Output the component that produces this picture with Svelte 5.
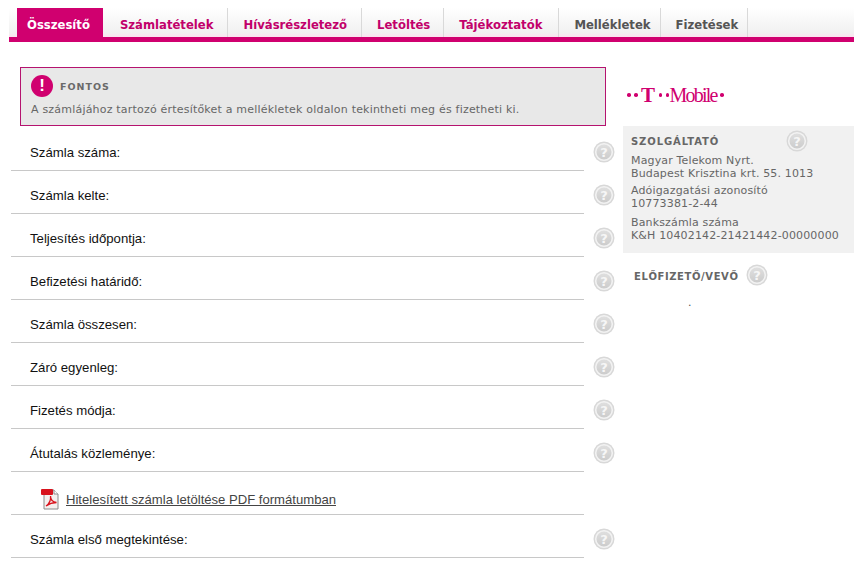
<script>
	const tabs = [
		{label: 'Összesítő', cls: 'active'},
		{label: 'Számlatételek', cls: 'second'},
		{label: 'Hívásrészletező', cls: ''},
		{label: 'Letöltés', cls: 'tight'},
		{label: 'Tájékoztatók', cls: 'wide'},
		{label: 'Mellékletek', cls: 'grey'},
		{label: 'Fizetések', cls: 'grey'}
	];
	const rowsTop = ['Számla száma:', 'Számla kelte:', 'Teljesítés időpontja:', 'Befizetési határidő:', 'Számla összesen:', 'Záró egyenleg:', 'Fizetés módja:', 'Átutalás közleménye:'];
</script>

{#snippet help()}
	<svg class="help" width="22" height="22" viewBox="0 0 22 22" aria-hidden="true">
		<defs>
			<linearGradient id="helpfill" x1="0" y1="0" x2="0" y2="1">
				<stop offset="0" stop-color="#e0e0e0" />
				<stop offset="1" stop-color="#cbcbcb" />
			</linearGradient>
		</defs>
		<circle cx="11" cy="11" r="10.5" fill="#d8d8d8" />
		<circle cx="11" cy="11" r="8.3" fill="url(#helpfill)" stroke="#f2f2f2" stroke-width="1.6" />
		<text x="11" y="15.5" text-anchor="middle" class="qm">?</text>
	</svg>
{/snippet}

<div class="page">
	<nav class="tabs">
		{#each tabs as tab}
			<a href="#top" class="tab {tab.cls}">{tab.label}</a>
		{/each}
	</nav>

	<div class="content">
		<div class="left">
			<div class="alert">
				<div class="alert-head">
					<span class="bang">!</span>
					<span class="alert-title">FONTOS</span>
				</div>
				<p>A számlájához tartozó értesítőket a mellékletek oldalon tekintheti meg és fizetheti ki.</p>
			</div>

			<div class="rows">
				{#each rowsTop as label}
					<div class="row">
						<div class="cell">{label}</div>
						{@render help()}
					</div>
				{/each}
				<div class="row">
					<div class="cell pdf">
						<svg width="22" height="22" viewBox="0 0 22 22" aria-hidden="true">
							<path d="M4 2h10l4 4v15H4z" fill="#f4f0ee" stroke="#8a8a8a" />
							<path d="M14 2v4h4" fill="#fff" stroke="#8a8a8a" />
							<rect x="1" y="1" width="12" height="6" rx="1" fill="#d8121c" />
							<path d="M6 18c3-2 5-6 4.500-10 0 4 2.500 6 6 6.500-4 0-7 1-10.500 3.500z" fill="none" stroke="#d8121c" stroke-width="1.300" />
						</svg>
						<a href="#top">Hitelesített számla letöltése PDF formátumban</a>
					</div>
				</div>
				<div class="row">
					<div class="cell">Számla első megtekintése:</div>
					{@render help()}
				</div>
			</div>
		</div>

		<aside class="right">
			<div class="logo">
				<i></i><i></i><span class="t">T</span><i></i><i></i><span class="mobile">Mobile</span><i></i>
			</div>
			<div class="provider">
				<h3>SZOLGÁLTATÓ</h3>
				<span class="provider-help">{@render help()}</span>
				<p>Magyar Telekom Nyrt.<br />Budapest Krisztina krt. 55. 1013</p>
				<p>Adóigazgatási azonosító<br />10773381-2-44</p>
				<p>Bankszámla száma<br />K&amp;H 10402142-21421442-00000000</p>
			</div>
			<div class="buyer">
				<h3>ELŐFIZETŐ/VEVŐ</h3>
				{@render help()}
			</div>
			<div class="dot">.</div>
		</aside>
	</div>
</div>

<style>
	:global(body) {
		margin: 0;
		background: #fff;
	}
	.page {
		width: 854px;
		height: 572px;
		overflow: hidden;
	}
	.tabs {
		display: flex;
		margin: 8px 0 0 9px;
		padding-left: 8px;
		height: 29px;
		border-bottom: 5px solid #d0006f;
		background: linear-gradient(#fff, #f1f1f1 85%, #fbe3ef);
	}
	.tab {
		display: block;
		padding: 0 14px 0 15px;
		border-right: 1px solid #d9d9d9;
		font: bold 11.65px/34px "DejaVu Sans", sans-serif;
		color: #c2006b;
		text-decoration: none;
	}
	.tab.active {
		background: #d0006f;
		color: #fff;
		padding: 0 13px 0 10px;
		border-right: 0;
	}
	.tab.second {
		padding-left: 17px;
	}
	.tab.tight {
		padding-right: 13px;
	}
	.tab.wide {
		padding-right: 16px;
	}
	.tab.grey {
		color: #555;
		padding-right: 9px;
	}
	.content {
		display: flex;
	}
	.left {
		width: 612px;
		padding-left: 11px;
		box-sizing: border-box;
	}
	.alert {
		margin: 25px 0 0 9px;
		width: 586px;
		height: 59px;
		box-sizing: border-box;
		border: 1px solid #b5136f;
		background: #e8e8e8;
		padding: 6px 10px;
		color: #666;
		font-family: "DejaVu Sans", sans-serif;
	}
	.alert-head {
		display: flex;
		align-items: center;
		gap: 7px;
		padding-top: 1px;
	}
	.bang {
		width: 22px;
		height: 22px;
		border-radius: 50%;
		background: #d0006f;
		color: #fff;
		font: bold 17px/22px "Liberation Sans", sans-serif;
		text-align: center;
	}
	.alert-title {
		font-size: 9.5px;
		font-weight: bold;
		letter-spacing: 1px;
		color: #6a6a6a;
	}
	.alert p {
		margin: 5px 0 0;
		font-size: 11px;
		line-height: 16px;
		letter-spacing: 0.2px;
	}
	.rows {
		margin-top: 2px;
	}
	.row {
		display: flex;
		align-items: center;
		height: 43px;
	}
	.cell {
		width: 573px;
		height: 43px;
		box-sizing: border-box;
		flex: none;
		border-bottom: 1px solid #c8c8c8;
		padding: 17px 0 0 19px;
		font: 13.2px/16px "Liberation Sans", sans-serif;
		color: #111;
	}
	.pdf {
		display: flex;
		align-items: flex-end;
		gap: 4px;
		padding: 0 0 4px 29px;
		font-size: 13.1px;
	}
	.pdf a {
		color: #444;
		padding-bottom: 2px;
	}
	.help {
		flex: none;
		margin-left: 9px;
		margin-top: 4px;
		display: block;
	}
	.qm {
		font: bold 13px "DejaVu Sans", sans-serif;
		fill: #f6f6f6;
	}
	.right {
		flex: 1;
		padding: 11px 0 0 11px;
		position: relative;
	}
	.logo {
		display: flex;
		align-items: center;
		gap: 3.5px;
		height: 73px;
		box-sizing: border-box;
		padding: 11px 0 0 4px;
		color: #d0006f;
		font-family: "Liberation Serif", serif;
	}
	.logo i {
		width: 3.5px;
		height: 3.5px;
		background: #d0006f;
		border-radius: 50%;
	}
	.logo .t {
		font-weight: bold;
		font-size: 21px;
	}
	.logo .mobile {
		font-size: 20px;
		letter-spacing: -1.8px;
		margin-left: -3px;
	}
	.provider {
		position: relative;
		background: #f1f1f1;
		height: 127px;
		box-sizing: border-box;
		padding: 9px 8px;
		font: 11px/13px "DejaVu Sans", sans-serif;
		letter-spacing: 0.15px;
		color: #666;
	}
	.provider h3, .buyer h3 {
		margin: 0;
		font-size: 10px;
		letter-spacing: 0.9px;
		color: #666;
		line-height: 14px;
	}
	.buyer h3 {
		letter-spacing: 0.6px;
	}
	.provider p {
		margin: 4px 0 0;
	}
	.provider p:last-of-type {
		margin-top: 6px;
	}
	.provider p:first-of-type {
		margin-top: 5px;
	}
	.provider-help {
		position: absolute;
		left: 154px;
		top: 0;
	}
	.buyer {
		display: flex;
		align-items: center;
		padding: 15px 0 0 11px;
		font-family: "DejaVu Sans", sans-serif;
	}
	.buyer .help {
		margin: -4px 0 0 7px;
	}
	.dot {
		margin: 10px 0 0 65px;
		font: 11px/14px "DejaVu Sans", sans-serif;
		color: #555;
	}
</style>
